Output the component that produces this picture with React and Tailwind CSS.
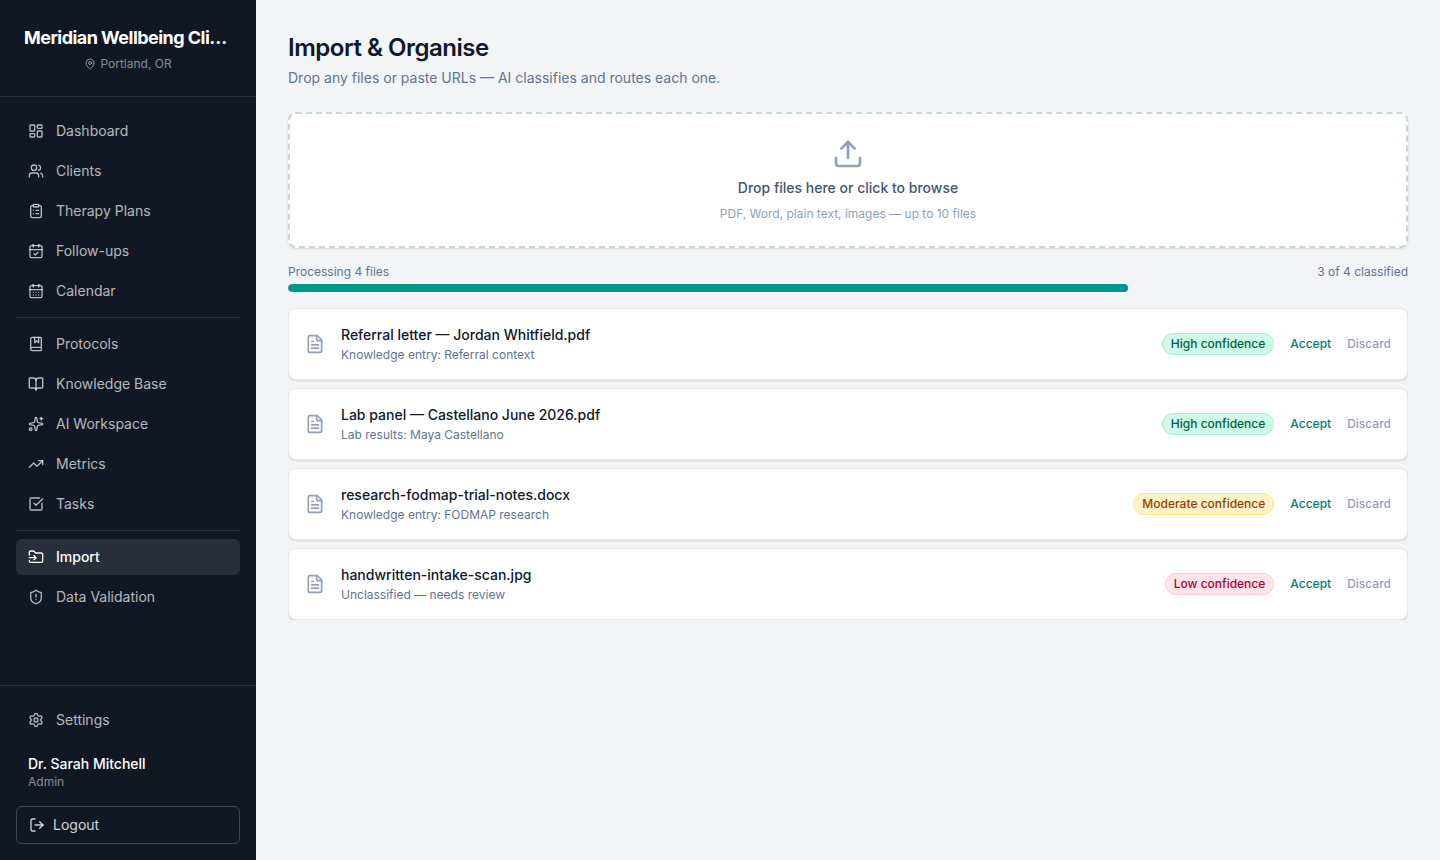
import React, { useState } from "react";
import {
  BookMarked,
  BookOpen,
  CalendarCheck,
  CalendarDays,
  ClipboardList,
  FileText,
  FolderInput,
  LayoutDashboard,
  LogOut,
  MapPin,
  Settings,
  ShieldAlert,
  Sparkles,
  SquareCheckBig,
  TrendingUp,
  Upload,
  Users,
} from "lucide-react";

const navGroups = [
  [
    { name: "Dashboard", icon: LayoutDashboard },
    { name: "Clients", icon: Users },
    { name: "Therapy Plans", icon: ClipboardList },
    { name: "Follow-ups", icon: CalendarCheck },
    { name: "Calendar", icon: CalendarDays },
  ],
  [
    { name: "Protocols", icon: BookMarked },
    { name: "Knowledge Base", icon: BookOpen },
    { name: "AI Workspace", icon: Sparkles },
    { name: "Metrics", icon: TrendingUp },
    { name: "Tasks", icon: SquareCheckBig },
  ],
  [
    { name: "Import", icon: FolderInput },
    { name: "Data Validation", icon: ShieldAlert },
  ],
];

const files = [
  { name: "Referral letter — Jordan Whitfield.pdf", detail: "Knowledge entry: Referral context", confidence: "High" },
  { name: "Lab panel — Castellano June 2026.pdf", detail: "Lab results: Maya Castellano", confidence: "High" },
  { name: "research-fodmap-trial-notes.docx", detail: "Knowledge entry: FODMAP research", confidence: "Moderate" },
  { name: "handwritten-intake-scan.jpg", detail: "Unclassified — needs review", confidence: "Low" },
];

const badgeStyles = {
  High: "bg-emerald-100 border-emerald-200 text-emerald-800",
  Moderate: "bg-amber-100 border-amber-200 text-amber-800",
  Low: "bg-rose-100 border-rose-200 text-rose-800",
};

function NavItem({ item, active, onSelect }) {
  const Icon = item.icon;
  return (
    <a
      href="#"
      onClick={(e) => {
        e.preventDefault();
        onSelect(item.name);
      }}
      className={`flex items-center gap-3 rounded-md px-3 py-2 text-sm ${
        active ? "bg-white/10 font-medium text-white" : "text-white/70 hover:text-white"
      }`}
    >
      <Icon className="size-4 shrink-0" />
      {item.name}
    </a>
  );
}

function Sidebar() {
  const [current, setCurrent] = useState("Import");

  return (
    <aside className="sticky top-0 flex h-screen w-64 shrink-0 flex-col bg-[#111824] text-white">
      {/* Clinic name */}
      <div className="border-b border-white/10 p-6 text-center">
        <div className="truncate text-lg font-bold tracking-[-0.03em]">Meridian Wellbeing Clinic</div>
        <div className="mt-1 flex items-center justify-center gap-1 text-xs text-white/50">
          <MapPin className="size-3" />
          Portland, OR
        </div>
      </div>

      <nav className="flex-1 overflow-y-auto p-4">
        {navGroups.map((group, index) => (
          <div
            key={index}
            className={`flex flex-col gap-1 ${index > 0 ? "mt-2 border-t border-white/10 pt-2" : ""}`}
          >
            {group.map((item) => (
              <NavItem key={item.name} item={item} active={current === item.name} onSelect={setCurrent} />
            ))}
          </div>
        ))}
      </nav>

      {/* Account */}
      <div className="border-t border-white/10 p-4">
        <NavItem
          item={{ name: "Settings", icon: Settings }}
          active={current === "Settings"}
          onSelect={setCurrent}
        />
        <div className="mt-2 px-3 py-2">
          <div className="text-sm font-medium">Dr. Sarah Mitchell</div>
          <div className="text-xs text-white/50">Admin</div>
        </div>
        <button
          type="button"
          className="mt-2 flex w-full items-center gap-2 rounded-md border border-white/20 px-3 py-2 text-sm text-white/80 hover:bg-white/10"
        >
          <LogOut className="size-4" />
          Logout
        </button>
      </div>
    </aside>
  );
}

function FileCard({ file }) {
  return (
    <li className="flex items-center gap-4 rounded-lg border border-slate-200 bg-white p-4 shadow-sm">
      <FileText className="size-5 shrink-0 text-slate-400" />
      <div className="min-w-0 flex-1">
        <div className="truncate text-sm font-medium text-slate-900">{file.name}</div>
        <div className="mt-0.5 truncate text-xs text-slate-500">{file.detail}</div>
      </div>
      <span className={`rounded-full border px-2 py-0.5 text-xs font-medium ${badgeStyles[file.confidence]}`}>
        {file.confidence} confidence
      </span>
      <button type="button" className="text-xs font-medium text-teal-700 hover:underline">
        Accept
      </button>
      <button type="button" className="text-xs font-medium text-slate-400 hover:underline">
        Discard
      </button>
    </li>
  );
}

export default function App() {
  const classified = 3;
  const progress = (classified / files.length) * 100;

  return (
    <div className="flex min-h-screen bg-gray-100 font-['Inter',sans-serif]">
      <Sidebar />

      <main className="min-w-0 flex-1 p-8">
        <h1 className="text-2xl font-semibold tracking-[-0.02em] text-slate-900">Import &amp; Organise</h1>
        <p className="mt-1 text-sm text-slate-500">
          Drop any files or paste URLs — AI classifies and routes each one.
        </p>

        {/* Drop zone */}
        <label className="relative mt-6 flex cursor-pointer flex-col items-center gap-2 rounded-lg border-2 border-dashed border-slate-300 bg-white p-6 shadow-sm">
          <input type="file" multiple className="sr-only" />
          <Upload className="size-8 text-slate-400" />
          <span className="text-sm font-medium text-slate-600">Drop files here or click to browse</span>
          <span className="text-xs text-slate-400">PDF, Word, plain text, images — up to 10 files</span>
        </label>

        {/* Queue */}
        <section className="mt-4 overflow-hidden">
          <div className="flex justify-between text-xs text-slate-500">
            <span>Processing {files.length} files</span>
            <span>
              {classified} of {files.length} classified
            </span>
          </div>
          <div className="mt-1 h-2 overflow-hidden rounded-full bg-[#f1f3f9]">
            <div className="h-full rounded-full bg-teal-600" style={{ width: `${progress}%` }} />
          </div>
          <ul className="mt-4 flex flex-col gap-2">
            {files.map((file) => (
              <FileCard key={file.name} file={file} />
            ))}
          </ul>
        </section>
      </main>
    </div>
  );
}
